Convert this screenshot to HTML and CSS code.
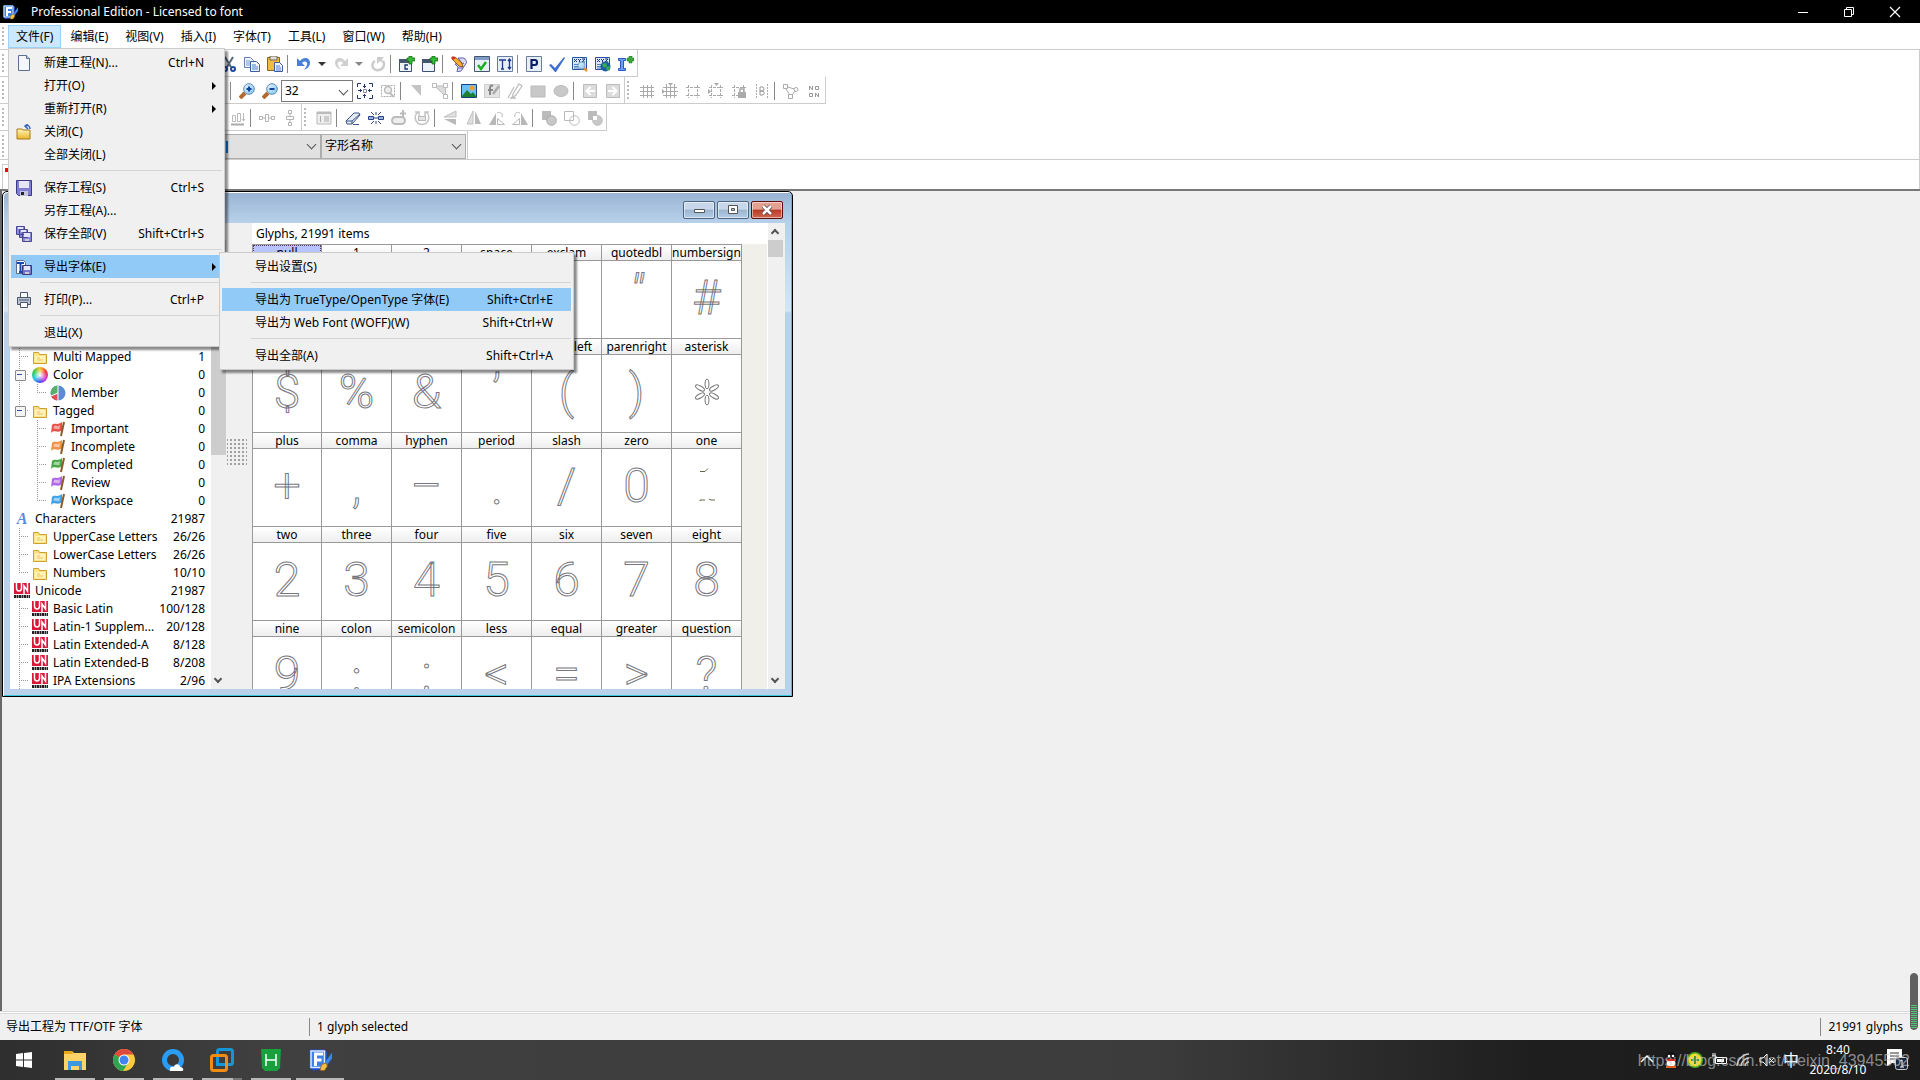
FILE: index.html
```html
<!DOCTYPE html>
<html lang="zh-CN">
<head>
<meta charset="utf-8">
<title>Professional Edition - Licensed to font</title>
<link rel="stylesheet" href="styles.css">
</head>
<body>
<svg class="sprite" aria-hidden="true">
  <defs>
    <linearGradient id="gold" x2="0" y2="1"><stop offset="0" stop-color="#fff6b8"/><stop offset="1" stop-color="#e8b52c"/></linearGradient>
    <linearGradient id="lens" x2="1" y2="1"><stop offset="0" stop-color="#e8f8ff"/><stop offset="1" stop-color="#7cc4ee"/></linearGradient>
  </defs>
  <symbol id="app" viewBox="0 0 16 16"><path d="M1 1h10l2 2-1 11-9 1-2-2z" fill="#1c50c8"/><path d="M2 2h9v11H2z" fill="#3f7fe8" stroke="#dce9ff"/><path d="M5 12V4h5M5 8h4" stroke="#fff" stroke-width="2" fill="none"/><path d="M16 3l-5 7-1 3 3-2 3-4z" fill="#3b86ea"/><path d="M8 15l1-4 3-1 1 2-2 3z" fill="#f0c048" stroke="#8a5a10" stroke-width=".5"/></symbol>
  <symbol id="new" viewBox="0 0 16 16"><path d="M2.500.5h8l3 3v12h-11z" fill="#f3f7fc" stroke="#5a6f92"/><path d="M10.500.5v3h3" fill="#cddaea" stroke="#5a6f92"/></symbol>
  <symbol id="close-folder" viewBox="0 0 16 16"><path d="M1 5h5l1 1h7v9H1z" fill="url(#gold)" stroke="#a87a18"/><path d="M14 5c0-3-2-4-4-3M12 0L9 2l3 3" fill="none" stroke="#3567b8" stroke-width="1.500"/></symbol>
  <symbol id="save" viewBox="0 0 16 16"><path d="M.5.5h15v15h-13l-2-2z" fill="#7f7dd4" stroke="#3a3880"/><path d="M3 1h10v7H3z" fill="#e4e6f8"/><path d="M4 11h8v5H4z" fill="#c4c6dc"/><path d="M5 12h3v3H5z" fill="#222"/></symbol>
  <symbol id="save-all" viewBox="0 0 16 16"><g stroke="#4a4894" fill="#8987d8"><path d="M.5.5h8v8h-8zM3.500 3.500h8v8h-8zM6.500 6.500h9v9h-9z"/></g><path d="M2 1h5v2H2zM5 4h5v2H5zM8 7h6v4H8z" fill="#e4e6f8"/><path d="M9 13h4v2H9z" fill="#ccc"/></symbol>
  <symbol id="export" viewBox="0 0 16 16"><path d="M.5 1.500h7l2 2v11h-9z" fill="#fff" stroke="#5a6f92"/><path d="M1 4h7M4.500 4v9M3 13h3" stroke="#1749b4" stroke-width="2"/><path d="M6.500 6.500h9v9h-9z" fill="#7977cc" stroke="#3a3880"/><path d="M8 7h6v4H8z" fill="#e4e6f8"/><path d="M9 13h4v2H9z" fill="#ccc"/></symbol>
  <symbol id="print" viewBox="0 0 16 16"><path d="M4.500.5h7v6h-7z" fill="#fff" stroke="#49566e"/><path d="M1.500 5.500h13v7h-13z" fill="#b8c2d0" stroke="#49566e"/><path d="M3 8h10" stroke="#49566e"/><path d="M4.500 10.500h7v5h-7z" fill="#fff" stroke="#49566e"/></symbol>
  <symbol id="cut" viewBox="0 0 16 16"><path d="M4 1l6 10M12 1L6 11" stroke="#567" stroke-width="2"/><circle cx="4" cy="13" r="2" fill="none" stroke="#1d4aa0" stroke-width="2"/><circle cx="12" cy="13" r="2" fill="none" stroke="#1d4aa0" stroke-width="2"/></symbol>
  <symbol id="copy" viewBox="0 0 16 16"><path d="M.5 1.500h6l3 3v7h-9z" fill="#eef4fc" stroke="#6480b4"/><path d="M2 5h4M2 7h4M2 9h4" stroke="#6f9ad8"/><path d="M6.500 5.500h6l3 3v7h-9z" fill="#eef4fc" stroke="#3b5c9c"/><path d="M8 9h4M8 11h6M8 13h6" stroke="#4c7cc8"/></symbol>
  <symbol id="paste" viewBox="0 0 16 16"><path d="M.5 1.500h12v13H.5z" fill="#f0bc40" stroke="#8a6418"/><path d="M3 0h7v4H3z" fill="#ddd" stroke="#765"/><path d="M7.500 6.500h5l3 3v6h-8z" fill="#eef4fc" stroke="#3b5c9c"/><path d="M9 10h4M9 12h5M9 14h5" stroke="#4c7cc8"/></symbol>
  <symbol id="undo" viewBox="0 0 16 16"><path d="M1 2v8h8L6 7c3-3 6-1 5 2-.5 2-2 3-3 5 4-2 6-4 6-7 0-5-6-7-10-2z" fill="#4a7fd8"/></symbol>
  <symbol id="redo" viewBox="0 0 16 16"><path d="M15 2v8H7l3-3C7 4 4 6 5 9c.5 2 2 3 3 5-4-2-6-4-6-7 0-5 6-7 10-2z" fill="#d0d0d0"/></symbol>
  <symbol id="refresh" viewBox="0 0 16 16"><path d="M13 5c2 3 1 8-4 9-4 1-7-2-6.500-5.500Q3 6 5 5" fill="none" stroke="#ccc" stroke-width="2.500"/><path d="M7 1h7l-2 2 1 4-3-2-3 3z" fill="#ccc"/></symbol>
  <symbol id="winplus" viewBox="0 0 16 16"><path d="M.5 4.500h12v11H.5z" fill="#eef3fa" stroke="#3c4f70"/><path d="M0 3h12v4H0z" fill="#44556e"/><path d="M10 0h3v2h3v3h-3v3h-3V5H8V2h2z" fill="#38b838" stroke="#0a600a" stroke-width=".7"/></symbol>
  <symbol id="winc" viewBox="0 0 16 16"><use href="#winplus"/><path d="M9 9H6v4h3" fill="none" stroke="#16356c" stroke-width="1.300"/></symbol>
  <symbol id="pencilnote" viewBox="0 0 16 16"><path d="M7 2l6 0 3 4-6 9-4 1 1-5-3-3 7-1z" fill="#dcdcf8" stroke="#6060b0"/><path d="M8 9l5-2M7 12l5 0" stroke="#6060b0"/><path d="M1 3l3-2 7 6 1 4-4-1z" fill="#f4b030" stroke="#7a3a08" stroke-width=".8"/><path d="M0 2l2-2 3 2-3 2z" fill="#d03020"/></symbol>
  <symbol id="wincheck" viewBox="0 0 16 16"><path d="M.5.5h15v15H.5z" fill="#e8eef6" stroke="#44556e"/><path d="M1 1h14v3H1z" fill="#7f9cc8"/><path d="M4 9l3 4 5-7" fill="none" stroke="#18b018" stroke-width="2.500"/></symbol>
  <symbol id="textsize" viewBox="0 0 16 16"><path d="M.5.5h15v15H.5z" fill="#e8eef8" stroke="#6a7c9c"/><path d="M2 4h7M5.500 4v9M4 13h3M12.500 3v10M11 5l1.500-2L14 5M11 11l1.500 2 1.500-2" fill="none" stroke="#1c3c88" stroke-width="1.300"/></symbol>
  <symbol id="preview" viewBox="0 0 16 16"><path d="M.5.5h15v15H.5z" fill="#e8eef8" stroke="#6a7c9c"/><path d="M5.500 13V4H9q2 0 2 2.500T9 9H6" fill="none" stroke="#0c1c68" stroke-width="2.200"/></symbol>
  <symbol id="check" viewBox="0 0 16 16"><path d="M0 9l2-1 4 4L15 1l1 1-9 14H6z" fill="#3f6fd0"/></symbol>
  <symbol id="xyz" viewBox="0 0 16 16"><path d="M.5 1.500h14v12H.5z" fill="#d8e8fa" stroke="#2c50a0"/><path d="M2 3l3 3M5 3L2 6M6 3l1.500 1.500L9 3M7.500 4v2.500M10 3h3l-3 3h3" stroke="#1c3880" fill="none"/><path d="M2 8.500h5M2 10.500h4M2 12h5" stroke="#5580c0"/></symbol>
  <symbol id="xyzfind" viewBox="0 0 16 16"><use href="#xyz"/><path d="M12 12l3 3" stroke="#e09030" stroke-width="2.500"/><circle cx="9.500" cy="9.500" r="3.500" fill="url(#lens)" stroke="#7aa0c0"/></symbol>
  <symbol id="xyzweb" viewBox="0 0 16 16"><use href="#xyz"/><circle cx="10.500" cy="10.500" r="5" fill="#1c5ca8"/><path d="M7 8l4-1 1 3-3 2zM11 11l4-1-1 4-2 1z" fill="#38b048"/></symbol>
  <symbol id="iplus" viewBox="0 0 16 16"><path d="M.5 2.500h7v2H5.500v8h2v2h-7v-2h2v-8h-2z" fill="#6ba0ee" stroke="#2c5cb8"/><path d="M11 0h3v2h2v3h-2v2h-3V5H9V2h2z" fill="#38a838" stroke="#1a701a" stroke-width=".5"/></symbol>
  <symbol id="zoomin" viewBox="0 0 16 16"><path d="M1 15l5-5" stroke="#b06a30" stroke-width="4"/><circle cx="10" cy="6" r="5.300" fill="url(#lens)" stroke="#5c88b4"/><path d="M7.500 6h5M10 3.500v5" stroke="#12449c" stroke-width="2"/></symbol>
  <symbol id="zoomout" viewBox="0 0 16 16"><path d="M1 15l5-5" stroke="#b06a30" stroke-width="4"/><circle cx="10" cy="6" r="5.300" fill="url(#lens)" stroke="#5c88b4"/><path d="M7.500 6h5" stroke="#12449c" stroke-width="2"/></symbol>
  <symbol id="fit" viewBox="0 0 16 16"><path d="M.5 4V.5H4M12 .5h3.500V4M15.500 12v3.500H12M4 15.500H.5V12M7.500 1v4M7.500 11v4M1 7.500h4M11 7.500h4M6 3.500h3M6 12.500h3M3.500 6v3M12.500 6v3" fill="none" stroke="#223468"/><path d="M6.500 6.500h3v3h-3z" fill="#fff" stroke="#889"/></symbol>
  <symbol id="zoomsel" viewBox="0 0 16 16"><path d="M1.500 2.500h13v11h-13z" fill="none" stroke="#aaa" stroke-dasharray="2 1"/><circle cx="8" cy="7" r="3.500" fill="#eee" stroke="#bbb" stroke-width="1.500"/><path d="M10 10l4 4" stroke="#bbb" stroke-width="2"/></symbol>
  <symbol id="tri" viewBox="0 0 16 16"><path d="M2 2h10v11z" fill="#c4c4c4"/></symbol>
  <symbol id="nodes" viewBox="0 0 16 16"><path d="M2 3h12v11z" fill="#ddd"/><path d="M.5.5h4v4h-4zM11.500.5h4v4h-4zM11.500 11.500h4v4h-4z" fill="#fff" stroke="#bbb"/><path d="M5 3h6M4 4l8 8M13.500 5v6" fill="none" stroke="#bbb"/></symbol>
  <symbol id="picture" viewBox="0 0 16 16"><path d="M.5 1.500h15v13H.5z" fill="#6cc0f8" stroke="#184080"/><circle cx="11" cy="5" r="2.500" fill="#ffa030"/><path d="M1 13l5-6 4 4 2-2 3 4v1H1z" fill="#1c8030"/></symbol>
  <symbol id="fpen" viewBox="0 0 16 16"><path d="M.5 1.500h15v13H.5z" fill="#e4e4e4" stroke="#ccc"/><path d="M9 3c-2-1-3 0-3 2v7M4 7h5" stroke="#888" stroke-width="2" fill="none"/><path d="M15 3l-6 8" stroke="#aaa" stroke-width="2.500"/></symbol>
  <symbol id="pens" viewBox="0 0 16 16"><path d="M1 15L7 4M5 15l1-4 6-10 3 2-6 9zM3 15h6" fill="none" stroke="#c0c0c0" stroke-width="1.300"/></symbol>
  <symbol id="rect" viewBox="0 0 16 16"><path d="M1 3h14v11H1z" fill="#c8c8c8" stroke="#bbb"/></symbol>
  <symbol id="ellipse" viewBox="0 0 16 16"><ellipse cx="8" cy="8" rx="7" ry="5.500" fill="#c8c8c8" stroke="#bbb"/></symbol>
  <symbol id="left" viewBox="0 0 16 16"><path d="M1.500 1.500h13v13h-13z" fill="#dcdcdc" stroke="#bbb"/><path d="M13 8H5M8.500 4l-4 4 4 4" fill="none" stroke="#fff" stroke-width="2"/></symbol>
  <symbol id="right" viewBox="0 0 16 16"><path d="M1.500 1.500h13v13h-13z" fill="#dcdcdc" stroke="#bbb"/><path d="M3 8h8M7.500 4l4 4-4 4" fill="none" stroke="#fff" stroke-width="2"/></symbol>
  <symbol id="grid" viewBox="0 0 16 16"><path d="M4.500 2v13M8.500 2v13M12.500 2v13M1 4.500h14M1 8.500h14M1 12.500h14" stroke="#aaa"/></symbol>
  <symbol id="gridsnap" viewBox="0 0 16 16"><path d="M4.500 1v14M8.500 3v12M12.500 1v14M1 4.500h14M2 8.500h14M1 12.500h14" stroke="#aaa"/><path d="M6 0h5L8.500 3zM0 6v5l3-2.500z" fill="#aaa"/></symbol>
  <symbol id="guide" viewBox="0 0 16 16"><path d="M3.500 2v13M12.500 2v13M1 4.500h14M1 12.500h14" stroke="#aaa" stroke-dasharray="3 1"/></symbol>
  <symbol id="guidesnap" viewBox="0 0 16 16"><use href="#guide"/><path d="M6 0h5L8.500 3zM0 6v5l3-2.500z" fill="#aaa"/></symbol>
  <symbol id="guidelock" viewBox="0 0 16 16"><use href="#guide"/><path d="M7 9h8v6H7z" fill="#aaa"/><path d="M9 9V6h4v3" stroke="#aaa" fill="none" stroke-width="1.500"/></symbol>
  <symbol id="boundb" viewBox="0 0 16 16"><path d="M2.500 1v14M13.500 1v14" stroke="#aaa" stroke-dasharray="2 1"/><path d="M6 4h3q2 2 0 4H6zM6 8h3q3 2 0 4H6z" fill="none" stroke="#999"/></symbol>
  <symbol id="net" viewBox="0 0 16 16"><path d="M.5 1.500h4v4h-4zM5.500 11.500h4v4h-4zM3 6l4 6M9 12l3-4M5 4l6 2" fill="none" stroke="#aaa"/><circle cx="13" cy="6.500" r="2" fill="none" stroke="#aaa"/></symbol>
  <symbol id="noon" viewBox="0 0 16 16"><path d="M3.500 7V3l3 4V3M9.500 3.500h3v3h-3zM3.500 10.500h3v3h-3zM9.500 14v-4l3 4v-4" fill="none" stroke="#999"/></symbol>
  <symbol id="align" viewBox="0 0 16 16"><path d="M1 14.500h13" stroke="#aaa" stroke-width="2"/><path d="M2.500 5.500h3v6h-3zM7.500 3.500h3v8h-3zM13.500 3v8M12 9l1.500 2L15 9" fill="none" stroke="#bbb"/></symbol>
  <symbol id="disth" viewBox="0 0 16 16"><path d="M.5 6.500h3v3h-3zM6.500 4.500h3v7h-3zM12.500 6.500h3v3h-3zM4 8h2M10 8h2" fill="none" stroke="#b4b4b4"/></symbol>
  <symbol id="distv" viewBox="0 0 16 16"><path d="M6.500.5h3v3h-3zM4.500 6.500h7v3h-7zM6.500 12.500h3v3h-3zM8 4v2M8 10v2" fill="none" stroke="#b4b4b4"/></symbol>
  <symbol id="props" viewBox="0 0 16 16"><path d="M1 2h14v12H1z" fill="#eee" stroke="#bbb"/><path d="M1 3h14" stroke="#bbb" stroke-width="2"/><path d="M4.500 6v6M8 7h5M8 9h5M8 11h5" stroke="#aaa"/></symbol>
  <symbol id="eraser" viewBox="0 0 16 16"><path d="M1 11l8-8h5l1 2-8 9H2z" fill="#e4ecf8" stroke="#3c5488"/><path d="M1 11h6l8-7M7 11v3M8 14.500h6" fill="none" stroke="#3c5488"/></symbol>
  <symbol id="burst" viewBox="0 0 16 16"><path d="M.5 6.500h5v3h-5zM10.500 6.500h5v3h-5zM6 8h4" fill="#9cb4e0" stroke="#2c4484"/><path d="M8 2v3M8 11v3M3 2l3 3M13 2l-3 3M3 14l3-3M13 14l-3-3" stroke="#2c4484"/></symbol>
  <symbol id="pillplus" viewBox="0 0 16 16"><rect x="1" y="7" width="13" height="7" rx="3.500" fill="#eee" stroke="#bbb" stroke-width="2"/><path d="M12 0v7M9 3.500h6" stroke="#bbb" stroke-width="2"/></symbol>
  <symbol id="rotate" viewBox="0 0 16 16"><path d="M4 2C-1 6 1 14 8 14.500 15 14 17 6 12 2M1 2h4v4M15 2h-4v4" fill="none" stroke="#c4c4c4" stroke-width="1.500"/><rect x="4.500" y="6.500" width="7" height="4" fill="#e4e4e4" stroke="#bbb"/></symbol>
  <symbol id="flipv" viewBox="0 0 16 16"><path d="M1 7l12-6v6z" fill="#e0e0e0" stroke="#c0c0c0"/><path d="M1 9l12 6V9z" fill="#b8b8b8"/></symbol>
  <symbol id="fliph" viewBox="0 0 16 16"><path d="M7 1v13H1z" fill="#e0e0e0" stroke="#c0c0c0"/><path d="M9 1v13h6z" fill="#b8b8b8"/></symbol>
  <symbol id="rotl" viewBox="0 0 16 16"><path d="M7 3v12H0z" fill="#b8b8b8"/><path d="M8.500 14.500h7l-7-6zM8 3c4-2 6 1 5 4" fill="none" stroke="#b8b8b8"/></symbol>
  <symbol id="rotr" viewBox="0 0 16 16"><path d="M9 3v12h7z" fill="#b8b8b8"/><path d="M7.500 14.500h-7l7-6zM8 3c-4-2-6 1-5 4" fill="none" stroke="#b8b8b8"/></symbol>
  <symbol id="union" viewBox="0 0 16 16"><path d="M1 1h9v9H1z" fill="#bbb"/><circle cx="10.500" cy="10.500" r="4.800" fill="#c8c8c8" stroke="#aaa"/></symbol>
  <symbol id="inter" viewBox="0 0 16 16"><path d="M.5 1.500h9v9h-9z" fill="#fff" stroke="#bbb"/><circle cx="10.500" cy="10.500" r="4.800" fill="none" stroke="#bbb"/></symbol>
  <symbol id="minus" viewBox="0 0 16 16"><path d="M1 1h9v9H1z" fill="#bbb"/><circle cx="10.500" cy="10.500" r="4.800" fill="#c8c8c8" stroke="#bbb"/><path d="M6 10V6h4v4z" fill="#fff"/></symbol>
  <symbol id="folder" viewBox="0 0 16 16"><path d="M1.500 3.500h5l1 2h7v9h-13z" fill="#fbe48a" stroke="#cfa02c"/><path d="M3 7h10v6H3z" fill="#fff3b8"/><path d="M5 9h3M5 11h6" stroke="#e8c45c"/></symbol>
  <symbol id="flag" viewBox="0 0 16 16"><path d="M2 4c3-3 5 1 10-3v8c-4 4-7-1-11 3z" fill="currentColor"/><path d="M4 5c2-1 3 1 6-1l-.5 4c-2 1-4-1-6 0z" fill="#fff" opacity=".5"/><path d="M14 1l-3 14" stroke="#8a5a28" stroke-width="2"/></symbol>
  <symbol id="uni" viewBox="0 0 16 16"><path d="M0 0h16v11H0z" fill="#d81838"/><path d="M2.500 0v5q0 3 2.500 3T7.500 5V0M10 11V3l3.500 5V0" fill="none" stroke="#fff" stroke-width="1.500"/><path d="M0 13.500h16" stroke="#222" stroke-width="3" stroke-dasharray="2 .5"/></symbol>
  <symbol id="pie" viewBox="0 0 16 16"><circle cx="8" cy="8" r="7.500" fill="#5a8cd0"/><path d="M8 8L8 .5A7.500 7.500 0 0 0 1 10z" fill="#58b068"/><path d="M7 9l-6 2a7.500 7.500 0 0 0 6 4.500z" fill="#e05050"/><path d="M8 0v16M8 8L1 11" stroke="#fff"/></symbol>
</svg>

<header class="titlebar">
  <svg class="ico"><use href="#app"/></svg>
  <h1>Professional Edition - Licensed to font</h1>
  <div class="win-controls">
    <button aria-label="Minimize"><svg viewBox="0 0 12 12"><path d="M1 6.500h10" stroke="#fff"/></svg></button>
    <button aria-label="Restore"><svg viewBox="0 0 12 12"><path d="M1.500 3.500h7v7h-7zM3.500 3V1.500h7v7H9" fill="none" stroke="#fff"/></svg></button>
    <button aria-label="Close"><svg viewBox="0 0 12 12"><path d="M1 1l10 10M11 1L1 11" stroke="#fff" stroke-width="1.200"/></svg></button>
  </div>
</header>

<nav class="menubar">
  <span class="grip"></span>
  <div class="menus">
  <div class="menu-host">
    <button class="menu open">文件(F)</button>
    <div class="popup file-menu">
      <button class="item"><svg class="ico"><use href="#new"/></svg><span>新建工程(N)...</span><kbd>Ctrl+N</kbd></button>
      <button class="item more"><span>打开(O)</span></button>
      <button class="item more"><span>重新打开(R)</span></button>
      <button class="item"><svg class="ico"><use href="#close-folder"/></svg><span>关闭(C)</span></button>
      <button class="item"><span>全部关闭(L)</span></button>
      <hr>
      <button class="item"><svg class="ico"><use href="#save"/></svg><span>保存工程(S)</span><kbd>Ctrl+S</kbd></button>
      <button class="item"><span>另存工程(A)...</span></button>
      <button class="item"><svg class="ico"><use href="#save-all"/></svg><span>保存全部(V)</span><kbd>Shift+Ctrl+S</kbd></button>
      <hr>
      <div class="menu-host">
        <button class="item more active"><svg class="ico"><use href="#export"/></svg><span>导出字体(E)</span></button>
        <div class="popup sub-menu">
          <button class="item"><span>导出设置(S)</span></button>
          <hr>
          <button class="item active"><span>导出为 TrueType/OpenType 字体(E)</span><kbd>Shift+Ctrl+E</kbd></button>
          <button class="item"><span>导出为 Web Font (WOFF)(W)</span><kbd>Shift+Ctrl+W</kbd></button>
          <hr>
          <button class="item"><span>导出全部(A)</span><kbd>Shift+Ctrl+A</kbd></button>
        </div>
      </div>
      <hr>
      <button class="item"><svg class="ico"><use href="#print"/></svg><span>打印(P)...</span><kbd>Ctrl+P</kbd></button>
      <hr>
      <button class="item"><span>退出(X)</span></button>
    </div>
  </div>
  <button class="menu">编辑(E)</button>
  <button class="menu">视图(V)</button>
  <button class="menu">插入(I)</button>
  <button class="menu">字体(T)</button>
  <button class="menu">工具(L)</button>
  <button class="menu">窗口(W)</button>
  <button class="menu">帮助(H)</button>
  </div>
</nav>

<div class="toolbars">
  <div class="tools">
    <div class="bar bar-main"><span class="grip"></span>
      <div class="set">
      <button class="tool" aria-label="Cut"><svg class="ico"><use href="#cut"/></svg></button>
      <button class="tool" aria-label="Copy"><svg class="ico"><use href="#copy"/></svg></button>
      <button class="tool" aria-label="Paste"><svg class="ico"><use href="#paste"/></svg></button>
      <i class="sep"></i>
      <button class="tool" aria-label="Undo"><svg class="ico"><use href="#undo"/></svg></button>
      <button class="drop" aria-label="Undo list"></button>
      <button class="tool" aria-label="Redo"><svg class="ico"><use href="#redo"/></svg></button>
      <button class="drop off" aria-label="Redo list"></button>
      <button class="tool" aria-label="Repeat"><svg class="ico"><use href="#refresh"/></svg></button>
      <i class="sep"></i>
      <button class="tool" aria-label="Add characters"><svg class="ico"><use href="#winc"/></svg></button>
      <button class="tool" aria-label="Add glyphs"><svg class="ico"><use href="#winplus"/></svg></button>
      <i class="sep"></i>
      <button class="tool" aria-label="Edit notes"><svg class="ico"><use href="#pencilnote"/></svg></button>
      <button class="tool" aria-label="Validate"><svg class="ico"><use href="#wincheck"/></svg></button>
      <button class="tool" aria-label="Metrics"><svg class="ico"><use href="#textsize"/></svg></button>
      <i class="sep"></i>
      <button class="tool" aria-label="Properties"><svg class="ico"><use href="#preview"/></svg></button>
      <button class="tool" aria-label="Check"><svg class="ico"><use href="#check"/></svg></button>
      <button class="tool" aria-label="Preview"><svg class="ico"><use href="#xyzfind"/></svg></button>
      <button class="tool" aria-label="Web preview"><svg class="ico"><use href="#xyzweb"/></svg></button>
      <button class="tool" aria-label="Install"><svg class="ico"><use href="#iplus"/></svg></button>
      </div>
    </div>
  </div>
  <div class="tools">
    <div class="bar bar-zoom"><span class="grip"></span>
      <div class="set">
      <i class="sep"></i>
      <button class="tool" aria-label="Zoom in"><svg class="ico"><use href="#zoomin"/></svg></button>
      <button class="tool" aria-label="Zoom out"><svg class="ico"><use href="#zoomout"/></svg></button>
      <span class="combo zoom"><select aria-label="Zoom"><option>32</option></select></span>
      <button class="tool" aria-label="Fit"><svg class="ico"><use href="#fit"/></svg></button>
      <button class="tool" aria-label="Zoom selection"><svg class="ico"><use href="#zoomsel"/></svg></button>
      <i class="sep"></i>
      <button class="tool" aria-label="Contour"><svg class="ico"><use href="#tri"/></svg></button>
      <button class="tool" aria-label="Points"><svg class="ico"><use href="#nodes"/></svg></button>
      <i class="sep"></i>
      <button class="tool" aria-label="Image"><svg class="ico"><use href="#picture"/></svg></button>
      <button class="tool" aria-label="Glyph pen"><svg class="ico"><use href="#fpen"/></svg></button>
      <button class="tool" aria-label="Draw"><svg class="ico"><use href="#pens"/></svg></button>
      <button class="tool" aria-label="Rectangle"><svg class="ico"><use href="#rect"/></svg></button>
      <button class="tool" aria-label="Ellipse"><svg class="ico"><use href="#ellipse"/></svg></button>
      <i class="sep"></i>
      <button class="tool" aria-label="Previous"><svg class="ico"><use href="#left"/></svg></button>
      <button class="tool" aria-label="Next"><svg class="ico"><use href="#right"/></svg></button>
      </div>
    </div>
    <div class="bar"><span class="grip"></span>
      <button class="tool" aria-label="Grid"><svg class="ico"><use href="#grid"/></svg></button>
      <button class="tool" aria-label="Snap to grid"><svg class="ico"><use href="#gridsnap"/></svg></button>
      <button class="tool" aria-label="Guides"><svg class="ico"><use href="#guide"/></svg></button>
      <button class="tool" aria-label="Snap to guides"><svg class="ico"><use href="#guidesnap"/></svg></button>
      <button class="tool" aria-label="Lock guides"><svg class="ico"><use href="#guidelock"/></svg></button>
      <button class="tool" aria-label="Bounds"><svg class="ico"><use href="#boundb"/></svg></button>
      <i class="sep"></i>
      <button class="tool" aria-label="Show points"><svg class="ico"><use href="#net"/></svg></button>
      <button class="tool" aria-label="Point numbers"><svg class="ico"><use href="#noon"/></svg></button>
    </div>
  </div>
  <div class="tools">
    <div class="bar bar-align"><span class="grip"></span>
      <div class="set">
      <button class="tool" aria-label="Align bottom"><svg class="ico"><use href="#align"/></svg></button>
      <i class="sep"></i>
      <button class="tool" aria-label="Distribute horizontally"><svg class="ico"><use href="#disth"/></svg></button>
      <button class="tool" aria-label="Distribute vertically"><svg class="ico"><use href="#distv"/></svg></button>
      </div>
    </div>
    <div class="bar"><span class="grip"></span>
      <button class="tool" aria-label="Glyph properties"><svg class="ico"><use href="#props"/></svg></button>
      <i class="sep"></i>
      <button class="tool" aria-label="Erase"><svg class="ico"><use href="#eraser"/></svg></button>
      <button class="tool" aria-label="Unlink"><svg class="ico"><use href="#burst"/></svg></button>
      <button class="tool" aria-label="Add part"><svg class="ico"><use href="#pillplus"/></svg></button>
      <button class="tool" aria-label="Direction"><svg class="ico"><use href="#rotate"/></svg></button>
      <i class="sep"></i>
      <button class="tool" aria-label="Flip vertical"><svg class="ico"><use href="#flipv"/></svg></button>
      <button class="tool" aria-label="Flip horizontal"><svg class="ico"><use href="#fliph"/></svg></button>
      <button class="tool" aria-label="Rotate left"><svg class="ico"><use href="#rotl"/></svg></button>
      <button class="tool" aria-label="Rotate right"><svg class="ico"><use href="#rotr"/></svg></button>
      <i class="sep"></i>
      <button class="tool" aria-label="Union"><svg class="ico"><use href="#union"/></svg></button>
      <button class="tool" aria-label="Intersection"><svg class="ico"><use href="#inter"/></svg></button>
      <button class="tool" aria-label="Exclusion"><svg class="ico"><use href="#minus"/></svg></button>
    </div>
  </div>
  <div class="tools filters">
    <div class="bar"><span class="grip"></span>
      <span class="combo flat first"><select aria-label="Filter"><option></option></select></span>
      <span class="combo flat"><select aria-label="Caption"><option>字形名称</option></select></span>
    </div>
  </div>
  <div class="tabs"><span class="tab"></span></div>
</div>

<main class="mdi">
  <section class="child">
    <div class="child-title">
      <button aria-label="Minimize"><svg viewBox="0 0 30 16"><path d="M10.500 7.500h10v3h-10z" fill="#fff" stroke="#555"/></svg></button>
      <button aria-label="Restore"><svg viewBox="0 0 30 16"><path d="M10.500 3.500h9v8h-9zM13.500 6.500h3v2h-3z" fill="#fff" stroke="#555" fill-rule="evenodd"/></svg></button>
      <button class="x" aria-label="Close"><svg viewBox="0 0 30 16"><path d="M11 4l8 8M19 4l-8 8" stroke="#544" stroke-width="4"/><path d="M11 4l8 8M19 4l-8 8" stroke="#fff" stroke-width="2.500"/></svg></button>
    </div>
    <div class="child-body">
      <ul class="tree">
        <li><i class="g tee"></i><svg class="ico"><use href="#folder"/></svg><span>Multi Mapped</span><b>1</b></li>
        <li><i class="g tee box"></i><i class="wheel"></i><span>Color</span><b>0</b></li>
        <li><i class="g pass"></i><i class="g end"></i><svg class="ico"><use href="#pie"/></svg><span>Member</span><b>0</b></li>
        <li><i class="g end box"></i><svg class="ico"><use href="#folder"/></svg><span>Tagged</span><b>0</b></li>
        <li><i class="g"></i><i class="g tee"></i><svg class="ico red"><use href="#flag"/></svg><span>Important</span><b>0</b></li>
        <li><i class="g"></i><i class="g tee"></i><svg class="ico orange"><use href="#flag"/></svg><span>Incomplete</span><b>0</b></li>
        <li><i class="g"></i><i class="g tee"></i><svg class="ico green"><use href="#flag"/></svg><span>Completed</span><b>0</b></li>
        <li><i class="g"></i><i class="g tee"></i><svg class="ico purple"><use href="#flag"/></svg><span>Review</span><b>0</b></li>
        <li><i class="g"></i><i class="g end"></i><svg class="ico blue"><use href="#flag"/></svg><span>Workspace</span><b>0</b></li>
        <li><i class="letter">A</i><span>Characters</span><b>21987</b></li>
        <li><i class="g tee"></i><svg class="ico"><use href="#folder"/></svg><span>UpperCase Letters</span><b>26/26</b></li>
        <li><i class="g tee"></i><svg class="ico"><use href="#folder"/></svg><span>LowerCase Letters</span><b>26/26</b></li>
        <li><i class="g end"></i><svg class="ico"><use href="#folder"/></svg><span>Numbers</span><b>10/10</b></li>
        <li><svg class="ico"><use href="#uni"/></svg><span>Unicode</span><b>21987</b></li>
        <li><i class="g tee"></i><svg class="ico"><use href="#uni"/></svg><span>Basic Latin</span><b>100/128</b></li>
        <li><i class="g tee"></i><svg class="ico"><use href="#uni"/></svg><span>Latin-1 Supplem...</span><b>20/128</b></li>
        <li><i class="g tee"></i><svg class="ico"><use href="#uni"/></svg><span>Latin Extended-A</span><b>8/128</b></li>
        <li><i class="g tee"></i><svg class="ico"><use href="#uni"/></svg><span>Latin Extended-B</span><b>8/208</b></li>
        <li><i class="g tee"></i><svg class="ico"><use href="#uni"/></svg><span>IPA Extensions</span><b>2/96</b></li>
      </ul>
      <div class="scroll tree-scroll"><i class="thumb"></i><i class="arrow down"></i></div>
      <div class="splitter"><i></i></div>
      <div class="glyph-pane">
        <p class="caption">Glyphs, 21991 items</p>
        <div class="glyphs">
          <div class="cell sel"><h2>null</h2></div>
          <div class="cell"><h2>1</h2></div>
          <div class="cell"><h2>2</h2></div>
          <div class="cell"><h2>space</h2></div>
          <div class="cell"><h2>exclam</h2></div>
          <div class="cell"><h2>quotedbl</h2><p class="slant">"</p></div>
          <div class="cell"><h2>numbersign</h2><p>#</p></div>
          <div class="cell"><h2></h2><p>$</p></div>
          <div class="cell"><h2></h2><p>%</p></div>
          <div class="cell"><h2></h2><p>&amp;</p></div>
          <div class="cell"><h2></h2><p>’</p></div>
          <div class="cell"><h2>parenleft</h2><p>(</p></div>
          <div class="cell"><h2>parenright</h2><p>)</p></div>
          <div class="cell"><h2>asterisk</h2><svg class="star" viewBox="0 0 28 28"><g fill="none" stroke="#777"><ellipse cx="14" cy="6" rx="2" ry="5"/><ellipse cx="14" cy="22" rx="2" ry="5"/><ellipse cx="7" cy="10" rx="2" ry="5" transform="rotate(-60 7 10)"/><ellipse cx="21" cy="18" rx="2" ry="5" transform="rotate(-60 21 18)"/><ellipse cx="21" cy="10" rx="2" ry="5" transform="rotate(60 21 10)"/><ellipse cx="7" cy="18" rx="2" ry="5" transform="rotate(60 7 18)"/></g></svg></div>
          <div class="cell"><h2>plus</h2><p>+</p></div>
          <div class="cell"><h2>comma</h2><p>,</p></div>
          <div class="cell"><h2>hyphen</h2><p>–</p></div>
          <div class="cell"><h2>period</h2><p class="round">.</p></div>
          <div class="cell"><h2>slash</h2><p>/</p></div>
          <div class="cell"><h2>zero</h2><p>0</p></div>
          <div class="cell"><h2>one</h2><svg class="one" viewBox="0 0 16 36"><path d="M1 4.500h5l3-3M1 34v-1h5M10 32l2 1h4" fill="none" stroke="#664"/></svg></div>
          <div class="cell"><h2>two</h2><p>2</p></div>
          <div class="cell"><h2>three</h2><p>3</p></div>
          <div class="cell"><h2>four</h2><p>4</p></div>
          <div class="cell"><h2>five</h2><p>5</p></div>
          <div class="cell"><h2>six</h2><p>6</p></div>
          <div class="cell"><h2>seven</h2><p>7</p></div>
          <div class="cell"><h2>eight</h2><p>8</p></div>
          <div class="cell"><h2>nine</h2><p>9</p></div>
          <div class="cell"><h2>colon</h2><p class="round">:</p></div>
          <div class="cell"><h2>semicolon</h2><p>:</p></div>
          <div class="cell"><h2>less</h2><p>&lt;</p></div>
          <div class="cell"><h2>equal</h2><p>=</p></div>
          <div class="cell"><h2>greater</h2><p>&gt;</p></div>
          <div class="cell"><h2>question</h2><p>?</p></div>
        </div>
      </div>
      <div class="scroll glyph-scroll"><i class="arrow up"></i><i class="thumb"></i><i class="arrow down"></i></div>
    </div>
  </section>
</main>

<footer class="status">
  <span class="hint">导出工程为 TTF/OTF 字体</span>
  <span class="pane">1 glyph selected</span>
  <span class="pane count">21991 glyphs</span>
  <i class="meter"></i>
</footer>

<div class="taskbar">
  <button class="start" aria-label="Start"><svg viewBox="0 0 16 16"><path d="M0 2l7-1v6.500H0zM8 .9L16 0v7.500H8zM0 8.500h7V15l-7-1zM8 8.500h8V16l-8-1z" fill="#fff"/></svg></button>
  <button class="task" aria-label="Explorer"><svg viewBox="0 0 24 24"><path d="M1 3h8l2 2h12v17H1z" fill="#ffd466"/><path d="M1 3h8l1 3H1z" fill="#e8a818"/><path d="M5 13h14v9h-3v-4H8v4H5z" fill="#3e98e0"/></svg></button>
  <button class="task" aria-label="Chrome"><svg viewBox="0 0 24 24"><circle cx="12" cy="12" r="11" fill="#fbca3e"/><path d="M12 12L2.500 6.500A11 11 0 0 1 21.500 6.500H12z" fill="#e04a3c"/><path d="M2.500 6.500A11 11 0 0 0 11 23l5.500-8.500L12 12z" fill="#2fa552"/><circle cx="12" cy="12" r="5.500" fill="#fff"/><circle cx="12" cy="12" r="4.500" fill="#4484f0"/></svg></button>
  <button class="task" aria-label="Browser"><svg viewBox="0 0 24 24"><circle cx="12" cy="12" r="8.500" fill="none" stroke="#2b9cf4" stroke-width="5"/><path d="M9 23c-1-4 2-5 4-4 1-4 6-3 6 0 4 0 4 4 2 4z" fill="#fff"/></svg></button>
  <button class="task multi" aria-label="VMware"><svg viewBox="0 0 24 24"><rect x="7.500" y="1.500" width="15" height="15" rx="2" fill="none" stroke="#1496d8" stroke-width="3"/><rect x="1.500" y="7.500" width="15" height="15" rx="2" fill="none" stroke="#f08c10" stroke-width="3"/><path d="M7.500 10v6.500H14" fill="none" stroke="#1496d8" stroke-width="3"/></svg></button>
  <button class="task" aria-label="HBuilder"><svg viewBox="0 0 24 24"><path d="M2 1h20l-1 19-3 3H6l-3-3z" fill="#18a03c"/><path d="M7 6v12M17 6v12M7 12h10" stroke="#fff" stroke-width="1.500"/></svg></button>
  <button class="task current" aria-label="Font editor"><svg viewBox="0 0 16 16"><use href="#app"/></svg></button>
  <div class="tray">
    <svg viewBox="0 0 16 16"><path d="M2 10l6-6 6 6" fill="none" stroke="#fff" stroke-width="1.500"/></svg>
    <svg viewBox="0 0 16 16"><ellipse cx="8" cy="7" rx="6" ry="7" fill="#111"/><ellipse cx="8" cy="11" rx="4.500" ry="4" fill="#fff"/><path d="M3 7h10v2H3z" fill="#e02828"/><circle cx="6" cy="4" r="1.300" fill="#fff"/><circle cx="10" cy="4" r="1.300" fill="#fff"/><path d="M3 15h10" stroke="#e06020" stroke-width="2"/></svg>
    <svg viewBox="0 0 16 16"><circle cx="8" cy="8" r="8" fill="#48a828"/><circle cx="8" cy="8" r="6.500" fill="#f4e018"/><path d="M8 4v8M4 8h8" stroke="#389020" stroke-width="2"/></svg>
    <svg viewBox="0 0 16 16"><path d="M4.500 5.500h11v6h-11zM2 1v3M4 1v3M1 4h4v3H3v4" fill="none" stroke="#fff"/><path d="M6 7h7v3H6z" fill="#fff"/></svg>
    <svg viewBox="0 0 16 16"><path d="M2 14C2 8 8 2 14 2M6 14c0-4 4-8 8-8M10 14c0-2 2-4 4-4" fill="none" stroke="#ccc" stroke-width="1.500"/></svg>
    <svg viewBox="0 0 16 16"><path d="M1 6h3l4-4v12l-4-4H1zM10 6l5 5M15 6l-5 5" fill="none" stroke="#fff"/></svg>
    <span class="ime">中</span>
    <span class="clock">8:40<br>2020/8/10</span>
    <span class="notice"><svg viewBox="0 0 24 24"><path d="M2 1h15v14H7l-5 3z" fill="#fff"/><path d="M5 5h9M5 8h9M5 11h6" stroke="#333"/><rect x="10.500" y="9.500" width="12" height="12" rx="2" fill="#1c2840" stroke="#ccc"/><path d="M15 13l2-1v7M15 19h4" fill="none" stroke="#fff"/></svg></span>
    <span class="watermark">https://blog.csdn.net/weixin_43945562</span>
  </div>
</div>
</body>
</html>
```
FILE: styles.css
```css
* { box-sizing: border-box; }
body {
  margin: 0;
  min-height: 100vh;
  display: flex;
  flex-direction: column;
  overflow: hidden;
  background: #f0f0f0;
  color: #000;
  font: 12px/18px "Noto Sans", "Noto Sans CJK SC", sans-serif;
}
button, select, kbd { font: inherit; color: inherit; }
button { border: 0; padding: 0; background: none; }
h1, h2, p, ul { margin: 0; padding: 0; font: inherit; }
.sprite { position: absolute; width: 0; height: 0; }
.ico { display: block; width: 16px; height: 16px; flex: none; }

/* title bar */
.titlebar {
  display: flex;
  align-items: center;
  height: 23px;
  padding: 0 2px;
  background: #000;
  color: #fff;
}
.titlebar h1 { margin-left: 13px; flex: 1; }
.win-controls { display: flex; }
.win-controls button { width: 46px; height: 20px; display: grid; place-items: center; }
.win-controls svg { width: 12px; height: 12px; }

/* menu bar */
.menubar {
  display: flex;
  height: 27px;
  padding: 2px 0 1px;
  background: #fff;
  border-bottom: 1px solid #ccc;
}
.grip {
  flex: none;
  width: 8px;
  margin: 2px 0;
  background: repeating-linear-gradient(#bbb 0 2px, transparent 2px 4px) 2px 0 / 2px 100% no-repeat;
}
.menus { display: flex; gap: 1px; }
.menu-host { position: relative; }
.menu { height: 23px; padding: 0 7px; border: 1px solid transparent; white-space: nowrap; }
.menu.open { background: #cce8ff; border-color: #99d1ff; }

.popup {
  position: absolute;
  z-index: 5;
  padding: 2px;
  background: #f0f0f0;
  border: 1px solid #ccc;
  box-shadow: 3px 3px 2px rgba(0, 0, 0, .45);
}
.file-menu { left: 0; top: 23px; width: 217px; }
.sub-menu { left: 208px; top: -3px; width: 355px; }
.item {
  display: flex;
  align-items: center;
  width: 100%;
  height: 23px;
  padding: 0 18px 0 33px;
  white-space: nowrap;
  text-align: left;
}
.item span { flex: 1; }
.item .ico { margin: 0 12px 0 -28px; }
.item.active { background: #91c9f7; }
.item.more::after {
  content: "";
  margin-right: -12px;
  border: 4px solid transparent;
  border-left-color: #000;
  border-right: 0;
}
.popup hr { height: 1px; margin: 4px 0 5px 29px; border: 0; background: #d4d4d4; }

/* toolbars */
.toolbars { background: #fff; border-right: 1px solid #ccc; }
.tools { display: flex; height: 27px; }
.bar { display: flex; align-items: center; padding-top: 2px; border: solid #ccc; border-width: 0 1px 1px 0; }
.bar .grip { align-self: stretch; }
.bar + .bar .grip { width: 10px; }
.set { display: flex; align-items: center; }
.bar-main .set { padding-left: 209px; }
.bar-zoom .set { padding-left: 221px; }
.bar-align .set { padding-left: 218px; }
.tool { width: 23px; height: 23px; display: grid; place-items: center; }
.sep { width: 6px; height: 18px; background: linear-gradient(#888, #888) 1px 0 / 1px 100% no-repeat; }
.drop { width: 14px; height: 23px; display: grid; place-items: center; }
.drop::before { content: ""; border: 4px solid transparent; border-top-color: #333; border-bottom: 0; }
.drop.off::before { border-top-color: #888; }
.combo { position: relative; display: block; }
.combo select {
  appearance: none;
  display: block;
  width: 100%;
  height: 100%;
  padding: 0 3px;
  border: 1px solid #7a7a7a;
  border-radius: 0;
  background: #fff;
}
.combo::after {
  content: "";
  position: absolute;
  right: 6px;
  top: 7px;
  width: 6px;
  height: 6px;
  border: solid #555;
  border-width: 0 1px 1px 0;
  transform: rotate(45deg);
}
.combo.zoom { width: 72px; height: 22px; }
.combo.flat { width: 145px; height: 25px; }
.combo.flat select { background: #e1e1e1; border-color: #adadad; }
.combo.first { width: 313px; }
.combo.first select { background: linear-gradient(#0078d7, #0078d7) 217px 6px / 2px 12px no-repeat, #e1e1e1; }
.filters { height: 29px; border-bottom: 1px solid #ccc; }
.filters .bar { border-bottom: 0; padding-right: 1px; }
.tabs { height: 29px; padding: 4px 2px 0; }
.tab {
  display: block;
  width: 7px;
  height: 25px;
  border: solid #ccc;
  border-width: 1px 0 0 1px;
  background: linear-gradient(#f00, #f00) 2px 3px / 3px 4px no-repeat;
}

/* document area */
.mdi {
  position: relative;
  flex: 1;
  min-height: 300px;
  border: solid #696969;
  border-width: 2px 0 0 2px;
  border-top-color: #787878;
}
.child {
  position: absolute;
  left: 0;
  top: 0;
  width: 791px;
  height: 506px;
  display: flex;
  flex-direction: column;
  padding: 1px 7px 7px;
  border: 1px solid #000;
  border-radius: 5px 5px 0 0;
  box-shadow: inset 1px 1px #fff, inset -1px -1px #37c8dc;
  background: linear-gradient(#98b3d2, #b7d0ea 30px, #d6e4f4 119px, #b9d1ea 121px);
}
.child-title { display: flex; justify-content: flex-end; gap: 2px; height: 30px; padding: 8px 2px 0; }
.child-title button {
  width: 32px;
  height: 18px;
  border: 1px solid #4e6580;
  border-radius: 2px;
  background: linear-gradient(#c8d8ea 45%, #9ab4d0 50%, #b4cce6);
  box-shadow: inset 0 0 0 1px rgba(255, 255, 255, .5);
}
.child-title button.x { border-color: #5a1010; background: linear-gradient(#e4a090 45%, #b83a24 50%, #d06850); }
.child-title svg { display: block; width: 30px; height: 16px; }
.child-body { display: flex; flex: 1; min-height: 0; background: #f0f0f0; overflow: hidden; }

.tree { width: 201px; padding: 125px 6px 0 4px; background: #fff; list-style: none; overflow: hidden; }
.tree li { display: flex; align-items: center; height: 18px; white-space: nowrap; }
.tree span { flex: 1; margin-left: 5px; }
.tree b { font-weight: 400; }
.g {
  --v: repeating-linear-gradient(#999 0 1px, transparent 1px 2px);
  --h: repeating-linear-gradient(90deg, #999 0 1px, transparent 1px 2px);
  flex: none;
  width: 18px;
  height: 18px;
  padding: 4px 0 0 1px;
}
.g.tee { background: var(--v) 5px 0 / 1px 100% no-repeat, var(--h) 5px 8px / 10px 1px no-repeat; }
.g.end { background: var(--v) 5px 0 / 1px 8px no-repeat, var(--h) 5px 8px / 10px 1px no-repeat; }
.g.pass { background: var(--v) 5px 0 / 1px 100% no-repeat; }
.g.box::before {
  content: "";
  display: block;
  width: 9px;
  height: 9px;
  border: 1px solid #888;
  border-radius: 1px;
  background: linear-gradient(#3050a0, #3050a0) 1px 3px / 5px 1px no-repeat, #f4f4f4;
}
.wheel {
  flex: none;
  width: 16px;
  height: 16px;
  border-radius: 50%;
  background: radial-gradient(#fff, transparent 60%), conic-gradient(#f8c020, #f03030, #e030d0, #5050f0, #20c8e8, #30c840, #f8c020);
}
.letter { width: 16px; text-align: center; color: #5c8cdc; font: italic bold 16px/18px "Liberation Serif", serif; }
.red { color: #e85048; }
.orange { color: #f09040; }
.green { color: #48a848; }
.purple { color: #b068e8; }
.blue { color: #40a0e8; }

.scroll { position: relative; flex: none; background: #f0f0f0; }
.thumb { display: block; background: #cdcdcd; }
.tree-scroll { width: 15px; padding-top: 17px; }
.tree-scroll .thumb { height: 215px; }
.arrow {
  position: absolute;
  left: 4px;
  width: 6px;
  height: 6px;
  border: solid #555;
  border-width: 0 2px 2px 0;
  transform: rotate(45deg);
}
.arrow.down { bottom: 7px; }
.arrow.up { top: 7px; transform: rotate(225deg); }
.splitter { width: 26px; display: flex; align-items: center; padding-left: 1px; }
.splitter i {
  width: 20px;
  height: 28px;
  margin-bottom: 6px;
  background: conic-gradient(from 90deg at 2px 2px, transparent 270deg, #a0a0a0 0) 1px 0 / 4px 4px;
}
.glyph-pane { width: 516px; display: flex; flex-direction: column; background: #f0efea; border-right: 1px solid #fff; }
.caption { height: 21px; padding: 2px 4px; background: #fff; }
.glyphs {
  display: grid;
  grid-template-columns: repeat(7, 70px);
  grid-auto-rows: 94px;
  align-self: flex-start;
  flex: 1;
  min-height: 0;
  overflow: hidden;
}
.cell { border: solid #999; border-width: 1px 1px 0 0; background: #fff; overflow: hidden; }
.cell:nth-child(7n + 1) { border-left-width: 1px; }
.cell h2 {
  height: 16px;
  line-height: 15px;
  text-align: center;
  border-bottom: 1px solid #999;
  background: linear-gradient(#fff, #eee);
}
.cell.sel h2 { background: #b8c4ff; outline: 1px dotted #603060; outline-offset: -1px; }
.cell p {
  text-align: center;
  color: #fff;
  -webkit-text-stroke: 1px #777780;
  font: 300 48px/74px Roboto, "Noto Sans", sans-serif;
}
.cell p.slant { font-style: italic; line-height: 64px; }
.cell p.round { font-family: Lato, "Noto Sans", sans-serif; }
.star { display: block; width: 28px; height: 28px; margin: 23px auto; }
.one { display: block; width: 16px; height: 36px; margin: 18px auto; }
.glyph-scroll { width: 17px; padding-top: 17px; }
.glyph-scroll .thumb { width: 15px; height: 17px; }

/* status bar */
.status {
  position: relative;
  display: flex;
  align-items: center;
  height: 29px;
  padding: 2px 17px 0 6px;
  border-top: 1px solid #d8d8d8;
  box-shadow: inset 0 1px #fff, inset 0 2px #dcdcdc;
}
.hint { width: 303px; }
.pane { padding-left: 7px; border-left: 1px solid #888; }
.count { margin-left: auto; }
.meter {
  position: absolute;
  right: 2px;
  bottom: 10px;
  width: 8px;
  height: 57px;
  border: 1px solid #606060;
  border-radius: 4px;
  background: repeating-linear-gradient(#50c878 0 1px, #606060 1px 2px) 0 31px / 100% 24px no-repeat, #606060;
}

/* taskbar */
.taskbar {
  display: flex;
  gap: 1px;
  height: 40px;
  background: linear-gradient(90deg, #2e2e2e, #404040 14%, #3c3c3c 60%, #1e1e1e 80%, #1c1c1c);
  color: #fff;
}
.taskbar button { width: 48px; display: grid; place-items: center; }
.taskbar .start { width: 50px; padding-right: 2px; }
.start svg { width: 16px; height: 16px; }
.task svg { width: 24px; height: 24px; }
.taskbar .task { background: linear-gradient(#b8b8b8, #b8b8b8) 4px 100% / 40px 2px no-repeat; }
.taskbar .multi { background: linear-gradient(90deg, #b8b8b8 31px, #777 31px) 4px 100% / 40px 2px no-repeat; }
.taskbar .current { background: linear-gradient(#b8b8b8, #b8b8b8) 0 100% / 48px 2px no-repeat; }
.tray { position: relative; margin-left: auto; display: flex; align-items: center; gap: 8px; padding-right: 11px; }
.tray svg { width: 16px; height: 16px; }
.ime { font-size: 16px; width: 16px; }
.clock { width: 62px; text-align: center; line-height: 20px; }
.notice { margin-left: 8px; }
.notice svg { display: block; width: 24px; height: 24px; }
.watermark {
  position: absolute;
  right: 10px;
  top: 11px;
  color: rgba(200, 200, 200, .65);
  font: 16px/20px "Liberation Sans", sans-serif;
}
```
